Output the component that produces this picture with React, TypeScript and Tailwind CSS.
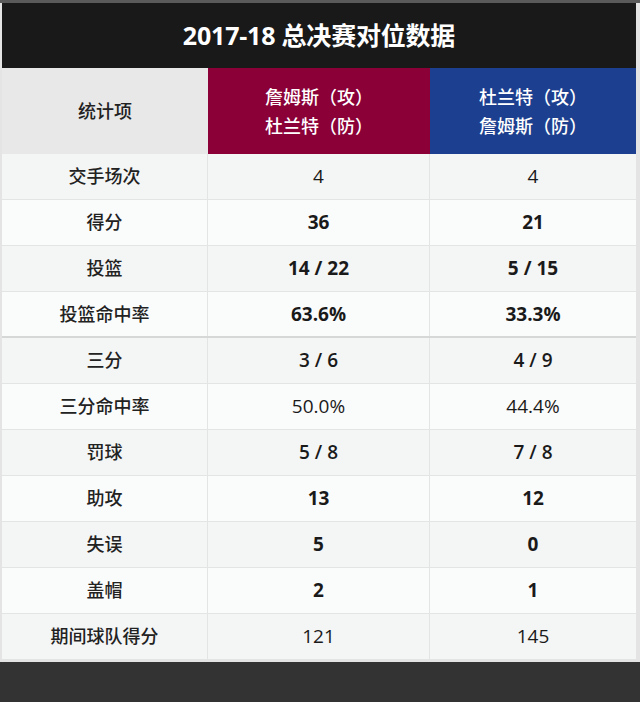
import React from "react";

type Row = { label: string; a: string; b: string; w: "b" | "s" | "m"; tone: "g" | "w"; thick?: boolean };

const rows: Row[] = [
  { label: "交手场次", a: "4", b: "4", w: "m", tone: "g" },
  { label: "得分", a: "36", b: "21", w: "b", tone: "w" },
  { label: "投篮", a: "14 / 22", b: "5 / 15", w: "b", tone: "g" },
  { label: "投篮命中率", a: "63.6%", b: "33.3%", w: "b", tone: "w", thick: true },
  { label: "三分", a: "3 / 6", b: "4 / 9", w: "s", tone: "g" },
  { label: "三分命中率", a: "50.0%", b: "44.4%", w: "m", tone: "w" },
  { label: "罚球", a: "5 / 8", b: "7 / 8", w: "s", tone: "g" },
  { label: "助攻", a: "13", b: "12", w: "b", tone: "w" },
  { label: "失误", a: "5", b: "0", w: "b", tone: "g" },
  { label: "盖帽", a: "2", b: "1", w: "b", tone: "w" },
  { label: "期间球队得分", a: "121", b: "145", w: "m", tone: "g" },
];

const font = { fontFamily: '"Open Sans", "Noto Sans CJK SC", sans-serif' };

export default function App() {
  return (
    <div className="w-[640px] h-[702px] bg-[#333333] flex flex-col" style={font}>
      <div className="h-[3px] bg-[#5a5a5a]" />
      <div className="bg-[#e4e4e4] px-[2px] pr-[4px] pb-[2px]">
        <div className="h-[65px] bg-[#191919] flex items-center justify-center">
          <span className="text-white text-[25px] font-bold tracking-[-0.2px]">2017-18 总决赛对位数据</span>
        </div>
        <div className="grid grid-cols-[206px_222px_206px] h-[86px]">
          <div className="bg-[#e8e8e8] flex items-center justify-center text-[18px] font-medium text-[#222]">统计项</div>
          <div className="bg-[#8a0037] flex flex-col items-center justify-center text-white text-[18px] font-medium leading-[29px] pt-[2px]">
            <span>詹姆斯（攻）</span>
            <span>杜兰特（防）</span>
          </div>
          <div className="bg-[#1d3f8f] flex flex-col items-center justify-center text-white text-[18px] font-medium leading-[29px] pt-[2px]">
            <span>杜兰特（攻）</span>
            <span>詹姆斯（防）</span>
          </div>
        </div>
        {rows.map((r) => {
          const bg = r.tone === "g" ? "bg-[#f4f5f5]" : "bg-[#fafbfb]";
          const border = r.thick ? "border-b-2 border-[#d6d8d8] h-[46px]" : "border-b border-[#e3e5e5] h-[46px]";
          const weight = r.w === "b" ? "font-bold" : r.w === "s" ? "font-semibold" : "font-medium";
          return (
            <div key={r.label} className={`grid grid-cols-[206px_222px_206px] ${bg} ${border}`}>
              <div className="flex items-center justify-center border-r border-[#e3e5e5] text-[18px] font-medium text-[#222]">{r.label}</div>
              <div className={`flex items-center justify-center border-r border-[#e3e5e5] text-[19px] text-[#1a1a1a] ${weight}`}>{r.a}</div>
              <div className={`flex items-center justify-center text-[19px] text-[#1a1a1a] ${weight}`}>{r.b}</div>
            </div>
          );
        })}
      </div>
    </div>
  );
}
